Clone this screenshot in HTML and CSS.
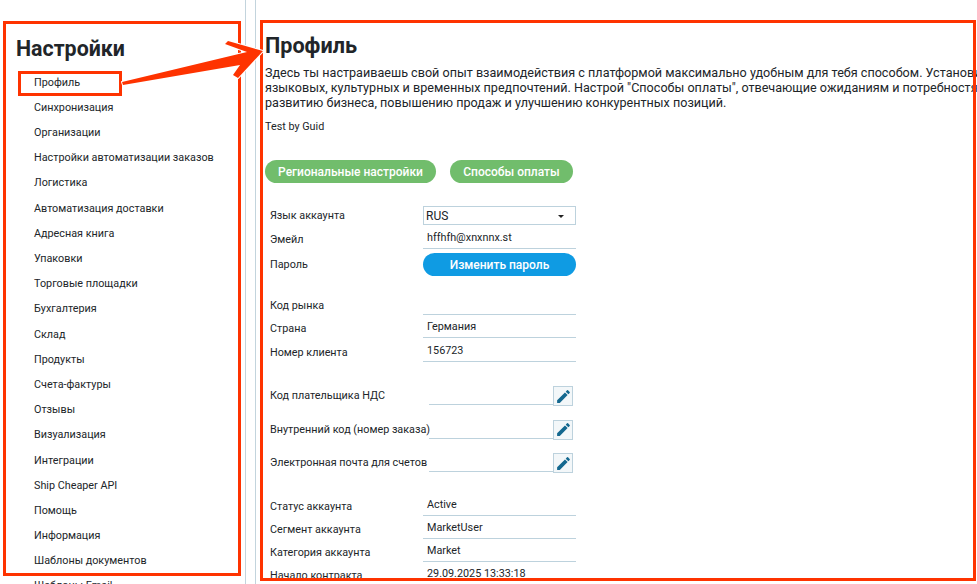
FILE: index.html
```html
<!DOCTYPE html>
<html lang="ru">
<head>
    <meta charset="UTF-8">
    <meta name="viewport" content="width=device-width, initial-scale=1.0">
    <title>Настройки</title>
    <link rel="stylesheet" href="styles.css">
</head>
<body>
    <div class="page">
        <aside class="sidebar">
            <h2 class="sidebar-title">Настройки</h2>
            <ul class="menu">
                <li>Профиль</li>
                <li>Синхронизация</li>
                <li>Организации</li>
                <li>Настройки автоматизации заказов</li>
                <li>Логистика</li>
                <li>Автоматизация доставки</li>
                <li>Адресная книга</li>
                <li>Упаковки</li>
                <li>Торговые площадки</li>
                <li>Бухгалтерия</li>
                <li>Склад</li>
                <li>Продукты</li>
                <li>Счета-фактуры</li>
                <li>Отзывы</li>
                <li>Визуализация</li>
                <li>Интеграции</li>
                <li>Ship Cheaper API</li>
                <li>Помощь</li>
                <li>Информация</li>
                <li>Шаблоны документов</li>
                <li>Шаблоны Email</li>
            </ul>
        </aside>
        <div class="gutter"></div>
        <main class="content">
            <h1 class="title">Профиль</h1>
            <p class="intro">Здесь ты настраиваешь свой опыт взаимодействия с платформой максимально удобным для тебя способом. Установи<br>языковых, культурных и временных предпочтений. Настрой "Способы оплаты", отвечающие ожиданиям и потребностям<br>развитию бизнеса, повышению продаж и улучшению конкурентных позиций.</p>
            <p class="note">Test by Guid</p>

            <div class="tabs">
                <button class="pill pill-green pill-region">Региональные настройки</button>
                <button class="pill pill-green pill-pay">Способы оплаты</button>
            </div>

            <div class="form">
                <div class="row row-lang">
                    <label>Язык аккаунта</label>
                    <div class="select">RUS<span class="caret"></span></div>
                </div>
                <div class="row row-email">
                    <label>Эмейл</label>
                    <div class="value">hffhfh@xnxnnx.st</div>
                </div>
                <div class="row row-pass">
                    <label>Пароль</label>
                    <button class="pill pill-blue">Изменить пароль</button>
                </div>
                <div class="row">
                    <label>Код рынка</label>
                    <div class="value"></div>
                </div>
                <div class="row row-wide">
                    <label>Страна</label>
                    <div class="value">Германия</div>
                </div>
                <div class="row row-wide">
                    <label>Номер клиента</label>
                    <div class="value">156723</div>
                </div>

                <div class="edit-group">
                    <div class="edit-row">
                        <label>Код плательщика НДС</label>
                        <div class="edit-line"></div>
                        <button class="edit-btn"><svg viewBox="0 0 24 24"><path d="M3 17.25V21h3.75L17.81 9.94l-3.75-3.75L3 17.25zM20.71 7.04a1 1 0 0 0 0-1.41l-2.34-2.34a1 1 0 0 0-1.41 0l-1.83 1.83 3.75 3.75 1.83-1.83z"/></svg></button>
                    </div>
                    <div class="edit-row">
                        <label>Внутренний код (номер заказа)</label>
                        <div class="edit-line"></div>
                        <button class="edit-btn"><svg viewBox="0 0 24 24"><path d="M3 17.25V21h3.75L17.81 9.94l-3.75-3.75L3 17.25zM20.71 7.04a1 1 0 0 0 0-1.41l-2.34-2.34a1 1 0 0 0-1.41 0l-1.83 1.83 3.75 3.75 1.83-1.83z"/></svg></button>
                    </div>
                    <div class="edit-row">
                        <label>Электронная почта для счетов</label>
                        <div class="edit-line"></div>
                        <button class="edit-btn"><svg viewBox="0 0 24 24"><path d="M3 17.25V21h3.75L17.81 9.94l-3.75-3.75L3 17.25zM20.71 7.04a1 1 0 0 0 0-1.41l-2.34-2.34a1 1 0 0 0-1.41 0l-1.83 1.83 3.75 3.75 1.83-1.83z"/></svg></button>
                    </div>
                </div>

                <div class="row">
                    <label>Статус аккаунта</label>
                    <div class="value">Active</div>
                </div>
                <div class="row">
                    <label>Сегмент аккаунта</label>
                    <div class="value">MarketUser</div>
                </div>
                <div class="row">
                    <label>Категория аккаунта</label>
                    <div class="value">Market</div>
                </div>
                <div class="row">
                    <label>Начало контракта</label>
                    <div class="value">29.09.2025 13:33:18</div>
                </div>
            </div>
        </main>
    </div>

    <!-- red annotation marks over the screenshot -->
    <div class="mark mark-sidebar"></div>
    <div class="mark mark-item"></div>
    <div class="mark mark-content"></div>
    <svg class="arrow" viewBox="0 0 977 584"><path d="M122 82 L247 52 L225 44 L228 41 L263 51 L238 78 L233 75 L240 65 L123 85 Z"/></svg>
</body>
</html>
```

FILE: styles.css
```css
html, body {
    margin: 0;
    height: 100%;
    overflow: hidden;
    background: #fff;
}
body {
    font-family: Roboto, "Liberation Sans", sans-serif;
    color: #212529;
    font-size: 10.8px;
}
.page {
    display: flex;
    height: 584px;
    overflow: hidden;
}

/* left menu */
.sidebar {
    width: 246px;
    flex: none;
    box-sizing: border-box;
    padding: 36px 0 0 16px;
    border-right: 1px solid #c3d4dd;
}
.sidebar-title {
    margin: 0 0 7.7px;
    font-size: 21.4px;
    line-height: 26px;
    font-weight: 700;
}
.menu {
    list-style: none;
    margin: 0;
    padding: 0 0 0 18px;
}
.menu li {
    height: 25.2px;
    line-height: 25.2px;
    white-space: nowrap;
}
.gutter {
    width: 10px;
    flex: none;
    box-sizing: border-box;
    border-right: 1px solid #c3d4dd;
}

/* right part */
.content {
    flex: 1;
    min-width: 0;
    box-sizing: border-box;
    padding: 33px 0 0 9px;
    overflow: hidden;
}
.title {
    margin: 0 0 6px;
    font-size: 21.6px;
    line-height: 26px;
    font-weight: 700;
}
.intro {
    margin: 0 0 10px;
    font-size: 12.6px;
    line-height: 15px;
    white-space: nowrap;
}
.note {
    margin: 0 0 26px;
    line-height: 14px;
}
.tabs {
    display: flex;
    gap: 14px;
    margin-bottom: 23px;
}
.pill {
    border: none;
    border-radius: 12px;
    height: 23px;
    padding: 0;
    color: #fff;
    font-family: inherit;
    font-size: 12px;
    font-weight: 500;
}
.pill-green {
    background: #71bd6c;
}
.pill-region {
    width: 171px;
}
.pill-pay {
    width: 123px;
}
.pill-blue {
    background: #0f9be3;
    width: 153px;
}

/* form rows */
.form {
    width: 306px;
    padding-left: 5px;
}
.row {
    display: flex;
    height: 23px;
}
.row-wide {
    height: 24px;
}
.row label {
    width: 153px;
    flex: none;
    padding-top: 7px;
    line-height: 14px;
}
.value {
    flex: 1;
    height: 22px;
    line-height: 23px;
    padding-left: 4px;
    border-bottom: 1px solid #bdd2dd;
}
.row-lang {
    height: 20px;
}
.row-lang label {
    padding-top: 3px;
}
.select {
    flex: 1;
    height: 17px;
    line-height: 19px;
    padding-left: 2px;
    font-size: 12px;
    position: relative;
    border: 1px solid #bdd2dd;
}
.caret {
    position: absolute;
    right: 11px;
    top: 8px;
    border: 3px solid transparent;
    border-top-color: #222;
    border-bottom: none;
}
.row-email {
    height: 27px;
}
.row-pass {
    height: 39px;
}
.row-pass label {
    padding-top: 5px;
}

.edit-group {
    padding-top: 23px;
    padding-bottom: 6px;
}
.edit-row {
    display: flex;
    align-items: flex-start;
    height: 33.5px;
}
.edit-row label {
    width: 159px;
    flex: none;
    padding-top: 3px;
    line-height: 14px;
    white-space: nowrap;
}
.edit-line {
    flex: 1;
    height: 18px;
    border-bottom: 1px solid #bdd2dd;
}
.edit-btn {
    width: 20px;
    height: 20px;
    padding: 0;
    display: flex;
    align-items: center;
    justify-content: center;
    box-sizing: border-box;
    background: #f3f7f9;
    border: 1px solid #bdd2dd;
    margin-right: 3px;
}
.edit-btn svg {
    display: block;
    width: 17px;
    height: 17px;
    fill: #14688f;
}

/* annotations */
.mark {
    position: absolute;
    box-sizing: border-box;
    border: 3px solid #fe3300;
}
.mark-sidebar {
    left: 3px;
    top: 21px;
    width: 238px;
    height: 555px;
}
.mark-item {
    left: 18px;
    top: 71px;
    width: 104px;
    height: 25px;
}
.mark-content {
    left: 260px;
    top: 20px;
    width: 716px;
    height: 561px;
}
.arrow {
    position: absolute;
    left: 0;
    top: 0;
    width: 977px;
    height: 584px;
    fill: #fe3300;
    stroke: #fff;
    stroke-width: 2px;
    stroke-linejoin: round;
    paint-order: stroke;
}
```
